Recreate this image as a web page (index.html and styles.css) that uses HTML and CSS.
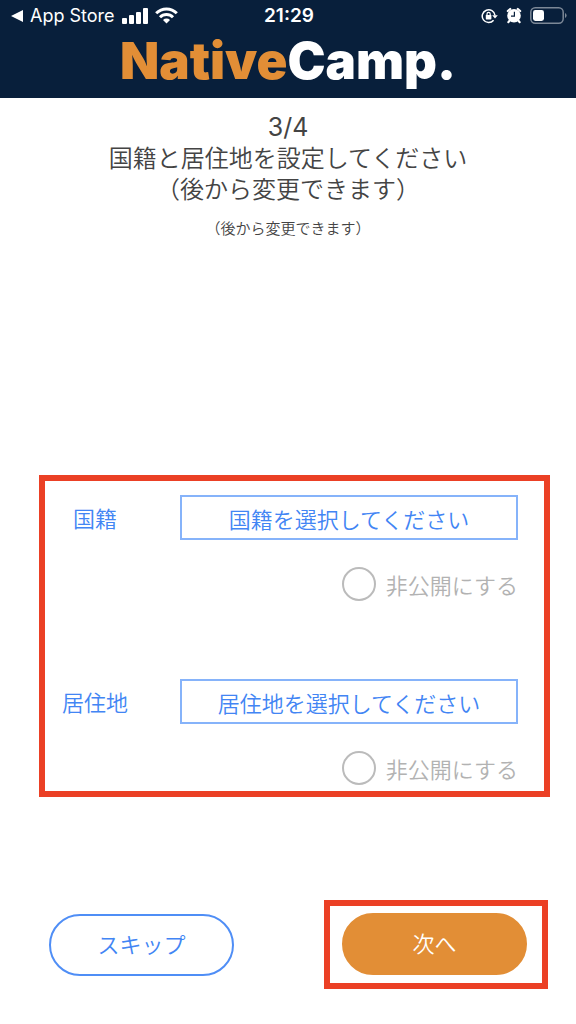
FILE: index.html
```
<!DOCTYPE html>
<html lang="ja">
<head>
    <meta charset="UTF-8">
    <meta name="viewport" content="width=device-width, initial-scale=1.0">
    <title>NativeCamp.</title>
    <link rel="stylesheet" href="styles.css">
</head>
<body>
    <header class="header">
        <div class="status-bar">
            <div class="status-left">
                <svg width="12" height="12" viewBox="0 0 12 12"><path d="M0 6L12 0V12Z" fill="#fff"/></svg>
                <a href="#" class="back-link">App Store</a>
                <svg class="signal" width="26" height="16" viewBox="0 0 26 16" fill="#fff">
                    <rect x="0" y="10" width="5" height="6" rx="1"/>
                    <rect x="7" y="7" width="5" height="9" rx="1"/>
                    <rect x="14" y="4" width="5" height="12" rx="1"/>
                    <rect x="21" y="0" width="5" height="16" rx="1"/>
                </svg>
                <svg width="23" height="17" viewBox="0 0 23 17" fill="none" stroke="#fff" stroke-width="3">
                    <path d="M1.2 6.2A14.6 14.6 0 0 1 21.8 6.2"/>
                    <path d="M5 10.2A9.2 9.2 0 0 1 18 10.2"/>
                    <path d="M11.5 16.5L8 13A5 5 0 0 1 15 13Z" fill="#fff" stroke="none"/>
                </svg>
            </div>
            <span class="time">21:29</span>
            <div class="status-right">
                <!-- Khóa xoay -->
                <svg width="17" height="16" viewBox="0 0 17 16" fill="none" stroke="#fff" stroke-width="1.5">
                    <path d="M12.6 12.2A6.4 6.4 0 1 1 14 7.4"/>
                    <path d="M11.2 7.2H16.8L14 10.4Z" fill="#fff" stroke="none"/>
                    <rect x="4.8" y="7" width="5.6" height="4.4" rx="0.6" fill="#fff" stroke="none"/>
                    <path d="M6 7.4V5.9A1.6 1.6 0 0 1 9.2 5.9V7.4" stroke-width="1.2"/>
                </svg>
                <!-- Báo thức -->
                <svg width="16" height="17" viewBox="0 0 16 17">
                    <circle cx="8" cy="8.8" r="6.8" fill="#fff"/>
                    <path d="M1.8 4L4.2 2M14.2 4L11.8 2M3.6 13.6L2.4 15.2M12.4 13.6L13.6 15.2" stroke="#fff" stroke-width="2.2" stroke-linecap="round"/>
                    <path d="M8.4 4.8V9.2H5" fill="none" stroke="#081f3b" stroke-width="1.2"/>
                </svg>
                <svg width="37" height="17" viewBox="0 0 37 17">
                    <rect x="0.8" y="0.8" width="32.4" height="15.4" rx="4.4" fill="none" stroke="#7c8897" stroke-width="1.5"/>
                    <rect x="3" y="3" width="11" height="11" rx="2.4" fill="#fff"/>
                    <path d="M35 6V11Q36.6 10.4 36.6 8.5T35 6Z" fill="#7c8897"/>
                </svg>
            </div>
        </div>
        <div class="logo"><span class="logo-native">Native</span>Camp.</div>
    </header>

    <main class="content">
        <h1 class="title"><span class="step">3/4</span><br>国籍と居住地を設定してください<br>（後から変更できます）</h1>
        <p class="note">（後から変更できます）</p>

        <form class="form">
            <div class="fields highlight">
                <div class="field">
                    <label class="field-label" for="nationality">国籍</label>
                    <select class="field-select" id="nationality">
                        <option>国籍を選択してください</option>
                    </select>
                    <label class="private"><input type="checkbox" class="private-check">非公開にする</label>
                </div>
                <div class="field">
                    <label class="field-label" for="residence">居住地</label>
                    <select class="field-select" id="residence">
                        <option>居住地を選択してください</option>
                    </select>
                    <label class="private"><input type="checkbox" class="private-check">非公開にする</label>
                </div>
            </div>

            <div class="actions">
                <button type="button" class="btn btn-skip">スキップ</button>
                <div class="next highlight">
                    <button type="button" class="btn btn-next">次へ</button>
                </div>
            </div>
        </form>
    </main>
</body>
</html>
```
FILE: styles.css
```
* {
    box-sizing: border-box;
}
body {
    margin: 0;
    background-color: #fff;
    color: #444;
    font-family: Inter, "Noto Sans CJK JP", sans-serif;
    font-weight: 350;
}
.header {
    height: 98px;
    background-color: #081f3b;
    color: #fff;
}
.status-bar {
    display: grid;
    grid-template-columns: 1fr auto 1fr;
    align-items: center;
    height: 31px;
    padding: 0 9px 0 11px;
}
.status-left,
.status-right {
    display: flex;
    align-items: center;
    gap: 7px;
}
.status-right {
    justify-content: flex-end;
    gap: 8px;
}
.back-link {
    color: #fff;
    font-size: 18px;
    font-weight: 400;
    text-decoration: none;
}
.time {
    font-size: 19px;
    font-weight: 600;
}
.logo {
    font-size: 51px;
    font-weight: 900;
    line-height: 60px;
    text-align: center;
}
.logo-native {
    color: #e28e36;
}
.title {
    margin: 14px 0 0;
    font-size: 24px;
    font-weight: 350;
    line-height: 31px;
    text-align: center;
}
.step {
    font-size: 25px;
    font-weight: 400;
}
.note {
    margin: 12px 0 0;
    font-size: 15px;
    line-height: 24px;
    text-align: center;
}
.form {
    margin-top: 234px;
    font-family: "Noto Sans CJK JP", sans-serif;
    font-size: 22px;
    line-height: 32px;
}

/* Khung đỏ */
.highlight {
    border: 6px solid #eb4025;
}
.fields {
    display: flex;
    flex-direction: column;
    gap: 78px;
    margin: 0 26px 0 39px;
    padding: 14px 26px 6px 0;
}
.field {
    display: grid;
    grid-template-columns: 100px 1fr;
    align-items: center;
    gap: 27px 35px;
    color: #4285f4;
}
.field-label {
    padding-bottom: 2px;
    text-align: center;
}
.field-select {
    width: 100%;
    height: 45px;
    padding: 0;
    border: 2px solid #86b3fa;
    border-radius: 0;
    background-color: #fff;
    color: #4285f4;
    font: inherit;
    text-align: center;
    text-align-last: center;
    appearance: none;
}
.private {
    grid-column: 2;
    justify-self: end;
    display: flex;
    align-items: center;
    gap: 10px;
    height: 34px;
    color: #b2b2b2;
}
.private-check {
    width: 34px;
    height: 34px;
    margin: 0;
    border: 2px solid #bbb;
    border-radius: 50%;
    appearance: none;
}
.private-check:checked {
    background-color: #4285f4;
}
.actions {
    display: flex;
    justify-content: space-between;
    align-items: center;
    margin-top: 103px;
    padding: 0 28px 35px 49px;
}
.next {
    padding: 7px 15px 8px 12px;
}
.btn {
    display: block;
    width: 185px;
    height: 62px;
    padding: 0 0 4px;
    border: 2px solid #4f8ef6;
    border-radius: 31px;
    background-color: #fff;
    color: #4285f4;
    font: inherit;
    cursor: pointer;
}
.btn-next {
    border-color: #e28e36;
    background-color: #e28e36;
    color: #fff;
}
```
